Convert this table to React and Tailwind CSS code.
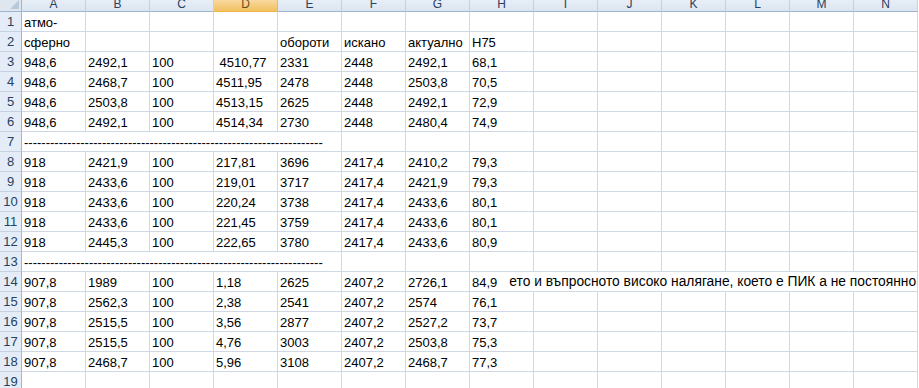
import React from "react";

const COLS = ["A","B","C","D","E","F","G","H","I","J","K","L","M","N"];
const DASH = "-".repeat(69);
const LONG = "ето и въпросното високо налягане, което е ПИК а не постоянно";

const rows = [
  ["атмо-"],
  ["сферно","","","","обороти","искано","актуално","Н75"],
  ["948,6","2492,1","100"," 4510,77","2331","2448","2492,1","68,1"],
  ["948,6","2468,7","100","4511,95","2478","2448","2503,8","70,5"],
  ["948,6","2503,8","100","4513,15","2625","2448","2492,1","72,9"],
  ["948,6","2492,1","100","4514,34","2730","2448","2480,4","74,9"],
  "dash",
  ["918","2421,9","100","217,81","3696","2417,4","2410,2","79,3"],
  ["918","2433,6","100","219,01","3717","2417,4","2421,9","79,3"],
  ["918","2433,6","100","220,24","3738","2417,4","2433,6","80,1"],
  ["918","2433,6","100","221,45","3759","2417,4","2433,6","80,1"],
  ["918","2445,3","100","222,65","3780","2417,4","2433,6","80,9"],
  "dash",
  "long",
  ["907,8","2562,3","100","2,38","2541","2407,2","2574","76,1"],
  ["907,8","2515,5","100","3,56","2877","2407,2","2527,2","73,7"],
  ["907,8","2515,5","100","4,76","3003","2407,2","2503,8","75,3"],
  ["907,8","2468,7","100","5,96","3108","2407,2","2468,7","77,3"],
  [],
];

const cell = "h-[20px] border-r border-b border-[#d0d7e5] pl-[2px] flex items-end pb-[2px] whitespace-pre overflow-visible leading-none";
const rowHead = "h-[20px] border-r border-b border-r-[#9eb6ce] border-b-[#c5d1e0] bg-[#e4ecf7] flex items-end justify-center pb-[3px] text-[#27415f] leading-none";

export default function App() {
  return (
    <div className="w-[919px] h-[388px] overflow-hidden bg-white text-[13px] text-black" style={{ fontFamily: '"Liberation Sans", Arial, sans-serif' }}>
      <div className="grid grid-cols-[22px_repeat(14,64px)]">
        <div className="h-[12px] border-r border-b border-[#9eb6ce] bg-[#dfe6ef] relative overflow-hidden">
          <div className="absolute right-[2px] bottom-[2px] w-0 h-0 border-l-[9px] border-l-transparent border-b-[9px] border-b-[#b8c9dc]" />
        </div>
        {COLS.map((c) => (
          <div
            key={c}
            className={
              "h-[12px] border-r border-b flex items-end justify-center overflow-hidden leading-none pb-[1px] text-[12px] " +
              (c === "D"
                ? "bg-gradient-to-b from-[#f9d99f] to-[#f1c15f] border-r-[#f2b84e] border-b-[#f2b84e] text-[#6b4e1c]"
                : "bg-gradient-to-b from-[#e8eef7] to-[#dbe5f1] border-r-[#c5d1e0] border-b-[#9eb6ce] text-[#27415f]")
            }
          >
            {c}
          </div>
        ))}
        {rows.map((r, i) => {
          const n = i + 1;
          const head = <div key={"h" + n} className={rowHead}>{n}</div>;
          if (r === "dash") {
            return (
              <React.Fragment key={n}>
                {head}
                <div className={cell + " col-span-5"}>{DASH}</div>
                {COLS.slice(5).map((c) => <div key={c} className={cell} />)}
              </React.Fragment>
            );
          }
          if (r === "long") {
            const vals = ["907,8","1989","100","1,18","2625","2407,2","2726,1"];
            return (
              <React.Fragment key={n}>
                {head}
                {vals.map((v, j) => <div key={j} className={cell}>{v}</div>)}
                <div className={cell + " col-span-7"}>
                  <span>84,9</span>
                  <span className="ml-[12px] text-[13.8px]">{LONG}</span>
                </div>
              </React.Fragment>
            );
          }
          return (
            <React.Fragment key={n}>
              {head}
              {COLS.map((c, j) => <div key={c} className={cell}>{r[j] || ""}</div>)}
            </React.Fragment>
          );
        })}
      </div>
    </div>
  );
}
